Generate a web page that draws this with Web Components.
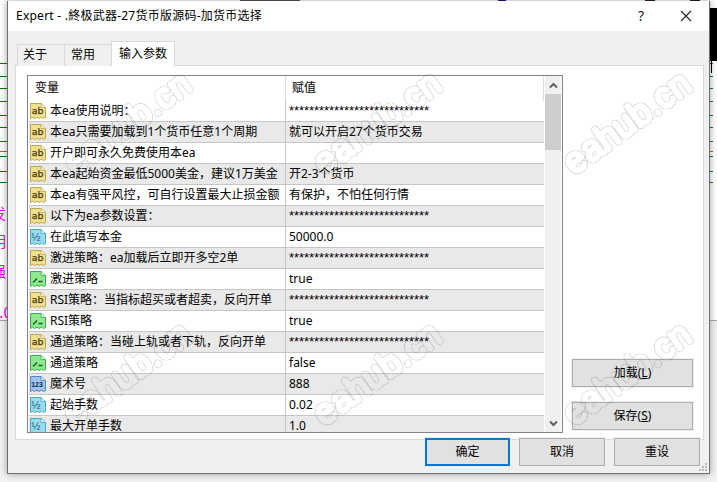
<!DOCTYPE html>
<html lang="zh-CN">
<head>
<meta charset="utf-8">
<title>Expert</title>
<style>
html,body{margin:0;padding:0;background:#fff;}
body{width:717px;height:482px;overflow:hidden;font:12px/16px "Noto Sans","Noto Sans CJK SC",sans-serif;color:#000;}
</style>
</head>
<body>
<x-desktop>
  <x-dialog heading="Expert - .終极武器-27货币版源码-加货币选择">
    <x-tabs slot="tabs">
      <x-tab>关于</x-tab><x-tab>常用</x-tab><x-tab active>输入参数</x-tab>
    </x-tabs>
    <x-param-table slot="table">
      <x-param-row type="ab" name="本ea使用说明：" value="****************************"></x-param-row>
      <x-param-row shade type="ab" name="本ea只需要加载到1个货币任意1个周期" value="就可以开启27个货币交易"></x-param-row>
      <x-param-row type="ab" name="开户即可永久免费使用本ea" value=""></x-param-row>
      <x-param-row shade type="ab" name="本ea起始资金最低5000美金，建议1万美金" value="开2-3个货币"></x-param-row>
      <x-param-row type="ab" name="本ea有强平风控，可自行设置最大止损金额" value="有保护，不怕任何行情"></x-param-row>
      <x-param-row shade type="ab" name="以下为ea参数设置：" value="****************************"></x-param-row>
      <x-param-row type="half" name="在此填写本金" value="50000.0"></x-param-row>
      <x-param-row shade type="ab" name="激进策略：ea加载后立即开多空2单" value="****************************"></x-param-row>
      <x-param-row type="bool" name="激进策略" value="true"></x-param-row>
      <x-param-row shade type="ab" name="RSI策略：当指标超买或者超卖，反向开单" value="****************************"></x-param-row>
      <x-param-row type="bool" name="RSI策略" value="true"></x-param-row>
      <x-param-row shade type="ab" name="通道策略：当碰上轨或者下轨，反向开单" value="****************************"></x-param-row>
      <x-param-row type="bool" name="通道策略" value="false"></x-param-row>
      <x-param-row shade type="int" name="魔术号" value="888"></x-param-row>
      <x-param-row type="half" name="起始手数" value="0.02"></x-param-row>
      <x-param-row shade type="half" name="最大开单手数" value="1.0"></x-param-row>
    </x-param-table>
    <x-btn slot="side"><span>加载(<u>L</u>)</span></x-btn>
    <x-btn slot="side"><span>保存(<u>S</u>)</span></x-btn>
    <x-btn slot="footer" primary w="85">确定</x-btn>
    <x-btn slot="footer" w="86">取消</x-btn>
    <x-btn slot="footer" w="86">重设</x-btn>
  </x-dialog>
  <x-watermark></x-watermark>
</x-desktop>
<script>
const FONT = '"Noto Sans","Noto Sans CJK SC",sans-serif';
function shadow(el, html){ el.attachShadow({mode:'open'}).innerHTML = html; return el.shadowRoot; }

customElements.define('x-desktop', class extends HTMLElement{
  constructor(){ super();
    const greens=[63,76,88,101,115,127,141,156,171,182];
    const rt=greens.map(y=>`<rect x="710" y="${y}" width="3" height="1" fill="#0b7d0b"/>`).join('');
    const lt=greens.map(y=>`<rect x="0" y="${y}" width="7" height="1" fill="#0b7d0b"/>`).join('');
    shadow(this,`<style>
      :host{display:block;position:relative;width:717px;height:482px;overflow:hidden;background:linear-gradient(#fff 0 320px,#a8a8a8 320px 321px,#f2f2f2 321px);}
      svg{position:absolute;left:0;top:0;}
      .m{position:absolute;color:#f000f0;font:15px/18px "Noto Sans CJK SC",sans-serif;white-space:nowrap;}
    </style>
    <svg width="717" height="482" aria-hidden="true">
      ${lt}${rt}
      <rect x="0" y="151" width="7" height="1" fill="#d8502a"/><rect x="710" y="151" width="3" height="1" fill="#d8502a"/>
      <rect x="709" y="8" width="8" height="53" fill="#000"/>
      <rect x="711" y="61" width="1" height="12" fill="#000"/>
      <rect x="240" y="0" width="60" height="1" fill="#555"/><rect x="498" y="0" width="8" height="1" fill="#1a1a8c"/>
      <rect x="645" y="0" width="10" height="1" fill="#222"/><rect x="690" y="0" width="10" height="1" fill="#222"/>
    </svg>
    <span class="m" style="left:-9px;top:204px">发</span>
    <span class="m" style="left:-9px;top:232px">明</span>
    <span class="m" style="left:-9px;top:262px">强</span>
    <span class="m" style="left:-9px;top:303px">0.0</span>
    <slot></slot>`);
  }
});

customElements.define('x-dialog', class extends HTMLElement{
  connectedCallback(){
    if(this.shadowRoot) return;
    shadow(this,`<style>
      :host{display:flex;flex-direction:column;position:absolute;left:7px;top:1px;width:703px;height:473px;box-sizing:border-box;
        border:1px solid #6f6f6f;background:#f0f0f0;box-shadow:0 0 7px rgba(0,0,0,.38);font:12px/16px ${FONT};color:#000;}
      header{flex:none;height:30px;background:#fff;display:flex;align-items:center;padding:0 0 0 8px;margin-top:-1px;}
      h1{flex:1;margin:0;font:inherit;white-space:nowrap;letter-spacing:.02em;}
      .help{width:46px;text-align:center;font-size:14px;color:#222;}
      .close{width:45px;display:flex;justify-content:flex-start;padding-left:16px;box-sizing:border-box;}
      .tabs{flex:none;height:34px;padding-left:9px;box-sizing:border-box;display:flex;align-items:flex-end;}
      .panel{flex:none;box-sizing:border-box;margin-left:7px;width:689px;height:375px;border:1px solid #d9d9d9;background:#fff;padding:9px 6px 6px 11px;display:flex;gap:9px;}
      .side{flex:none;width:121px;display:flex;flex-direction:column;justify-content:flex-end;gap:15px;padding-bottom:3px;box-sizing:border-box;height:100%;--btn-h:28px;}
      footer{flex:none;position:relative;margin-top:-2px;height:28px;display:flex;justify-content:flex-end;padding-right:9px;gap:0;--btn-h:28px;}
      ::slotted(x-btn[slot=side]){width:121px;}
      ::slotted(x-btn[slot=footer]){margin-left:9px;}
      .grip{position:absolute;right:1px;bottom:1px;}
    </style>
    <header><h1>${this.getAttribute('heading')}</h1>
      <span class="help">?</span>
      <span class="close"><svg width="12" height="12" viewBox="0 0 12 12" aria-hidden="true"><path d="M1 1L11 11M11 1L1 11" stroke="#222" stroke-width="1.1" fill="none"/></svg></span>
    </header>
    <div class="tabs"><slot name="tabs"></slot></div>
    <div class="panel"><slot name="table"></slot><div class="side"><slot name="side"></slot></div></div>
    <footer><slot name="footer"></slot></footer>
    <svg class="grip" width="9" height="9" viewBox="0 0 9 9" aria-hidden="true" fill="#b9b9b9">
      <rect x="6" y="0" width="2" height="2"/><rect x="3" y="3" width="2" height="2"/><rect x="6" y="3" width="2" height="2"/>
      <rect x="0" y="6" width="2" height="2"/><rect x="3" y="6" width="2" height="2"/><rect x="6" y="6" width="2" height="2"/>
    </svg>`);
  }
});

customElements.define('x-tabs', class extends HTMLElement{
  constructor(){ super(); shadow(this,`<style>:host{display:flex;align-items:flex-end;position:relative;top:1px;}</style><slot></slot>`); }
});
customElements.define('x-tab', class extends HTMLElement{
  constructor(){ super(); shadow(this,`<style>
    :host{display:block;box-sizing:border-box;height:22px;padding:0 5px;line-height:19px;background:#f0f0f0;border:1px solid #d9d9d9;border-bottom:none;margin-right:-1px;font-size:12px;}
    :host(:first-child){width:48px;}
    :host(:nth-child(2)){width:48px;padding-left:6px;}
    :host([active]){height:25px;width:64px;padding-left:7px;background:#fff;line-height:23px;position:relative;z-index:1;}
  </style><slot></slot>`); }
});

customElements.define('x-param-table', class extends HTMLElement{
  constructor(){ super(); shadow(this,`<style>
    :host{display:flex;flex:none;box-sizing:border-box;width:536px;height:358px;border:1px solid #82828e;background:#fff;overflow:hidden;font:12px/16px ${FONT};}
    .list{flex:none;width:515px;margin:0 1px;overflow:hidden;}
    .head{height:25px;display:grid;grid-template-columns:256px 1fr;line-height:24px;}
    .head div:first-child{padding-left:6px;}
    .head div:last-child{border-left:1px solid #dcdcdc;padding-left:6px;}
    .head{border-right:1px solid #dcdcdc;}
    .sb{flex:none;width:16px;background:#f0f0f0;display:flex;flex-direction:column;margin-right:1px;}
    .arrow{flex:none;height:18px;display:flex;align-items:center;justify-content:center;}
    .thumb{flex:none;height:56px;background:#cdcdcd;}
    .track{flex:1;}
  </style>
  <div class="list">
    <div class="head"><div>变量</div><div>赋值</div></div>
    <slot></slot>
  </div>
  <div class="sb">
    <div class="arrow"><svg width="9" height="7" viewBox="0 0 9 7" aria-hidden="true"><path d="M1 5.5L4.5 2L8 5.5" stroke="#606060" stroke-width="2" fill="none"/></svg></div>
    <div class="thumb"></div><div class="track"></div>
    <div class="arrow"><svg width="9" height="7" viewBox="0 0 9 7" aria-hidden="true"><path d="M1 1.5L4.5 5L8 1.5" stroke="#606060" stroke-width="2" fill="none"/></svg></div>
  </div>`); }
});

customElements.define('x-param-icon', class extends HTMLElement{
  connectedCallback(){
    if(this.shadowRoot) return;
    const p={
      ab:{f:'#f1e08f',s:'#bda650',c:'#4a3c10'},
      half:{f:'#9adcee',s:'#45a8c4',c:'#155a74'},
      bool:{f:'#8fe88f',s:'#3cae50',c:'#0f5c1c'},
      int:{f:'#a0c4ee',s:'#5085c4',c:'#0e2a58'}
    }[this.getAttribute('type')];
    const t=this.getAttribute('type');
    const g = t==='ab' ? `<text x="1.8" y="11" font-family="'DejaVu Sans',sans-serif" font-size="9.5" stroke="${p.c}" stroke-width=".25" fill="${p.c}">ab</text>`
      : t==='half' ? `<text x="1.2" y="11.5" font-family="'Liberation Sans',sans-serif" font-size="11" fill="${p.c}">½</text>`
      : t==='int' ? `<text x="1.2" y="10.8" font-family="'Liberation Sans',sans-serif" font-size="7" font-weight="700" fill="${p.c}">123</text>`
      : `<path d="M3 11.5L7 7.5M8.5 10.5H12.5" stroke="${p.c}" stroke-width="1.3" fill="none"/>`;
    shadow(this,`<style>:host{display:block;width:16px;height:16px;flex:none;}svg{display:block;}</style>
    <svg width="16" height="16" viewBox="0 0 16 16" aria-hidden="true">
      <path d="M.5 .5H11L15.5 4.5V14.5L13.5 15.5L11.5 14.2L9 15.5L7 14.2L4.5 15.5L2.5 14.2L.5 15.5Z" fill="${p.f}" stroke="${p.s}" stroke-width="1"/>
      <path d="M11 .5V4.5H15.5" fill="#fff" fill-opacity=".7" stroke="${p.s}" stroke-width=".8"/>
      ${g}
    </svg>`);
  }
});

customElements.define('x-param-row', class extends HTMLElement{
  connectedCallback(){
    if(this.shadowRoot) return;
    const v=this.getAttribute('value')||'';
    const stars=/^\*+$/.test(v);
    shadow(this,`<style>
      :host{display:grid;grid-template-columns:256px 1fr;height:21px;box-sizing:border-box;border-bottom:1px solid #c6c6c6;line-height:20px;white-space:nowrap;}
      :host([shade]){background:#e9e9e9;}
      .n{display:flex;align-items:center;gap:4px;padding-left:1px;overflow:hidden;}
      .v{border-left:1px solid #c6c6c6;padding-left:3px;overflow:hidden;}
      .stars{font:13px/20px "Liberation Sans",sans-serif;letter-spacing:-.06px;}
    </style>
    <div class="n"><x-param-icon type="${this.getAttribute('type')}"></x-param-icon><span>${this.getAttribute('name')}</span></div>
    <div class="v"><span class="${stars?'stars':''}">${v}</span></div>`);
  }
});

customElements.define('x-btn', class extends HTMLElement{
  connectedCallback(){
    if(this.shadowRoot) return;
    const w=this.getAttribute('w');
    shadow(this,`<style>
      :host{display:flex;align-items:center;justify-content:center;box-sizing:border-box;height:var(--btn-h,28px);${w?`width:${w}px;`:''}
        background:#e1e1e1;border:1px solid #adadad;box-shadow:0 0 0 1px #f0f0f0;font:12px/16px ${FONT};color:#000;}
      :host([primary]){border:2px solid #0078d7;}
    </style><slot></slot>`);
  }
});

customElements.define('x-watermark', class extends HTMLElement{
  constructor(){ super();
    const ends=[[194,89],[444,89],[694,89],[194,340],[444,340],[694,340]];
    const table=Array.from({length:32},(_,i)=>i===1?'.55':i===2?'1':i===3?'.6':'0').join(' ');
    shadow(this,`<style>:host{position:absolute;inset:0;display:block;pointer-events:none;mix-blend-mode:multiply;}svg{display:block;}</style>
    <svg width="717" height="482">
      <defs><filter id="ring" x="-10%" y="-10%" width="120%" height="120%" color-interpolation-filters="sRGB">
        <feGaussianBlur in="SourceAlpha" stdDeviation="1.3" result="b"/>
        <feComponentTransfer in="b" result="r"><feFuncA type="table" tableValues="${table}"/></feComponentTransfer>
        <feFlood flood-color="#d6d6d6"/><feComposite in2="r" operator="in"/>
      </filter></defs>
      <g filter="url(#ring)" font-family="'Liberation Sans',sans-serif" font-size="36" text-anchor="end" fill="#000">
      ${ends.map(([x,y])=>`<text transform="translate(${x} ${y}) rotate(-36)">eahub.cn</text>`).join('')}
      </g>
    </svg>`);
  }
});
</script>
</body>
</html>
